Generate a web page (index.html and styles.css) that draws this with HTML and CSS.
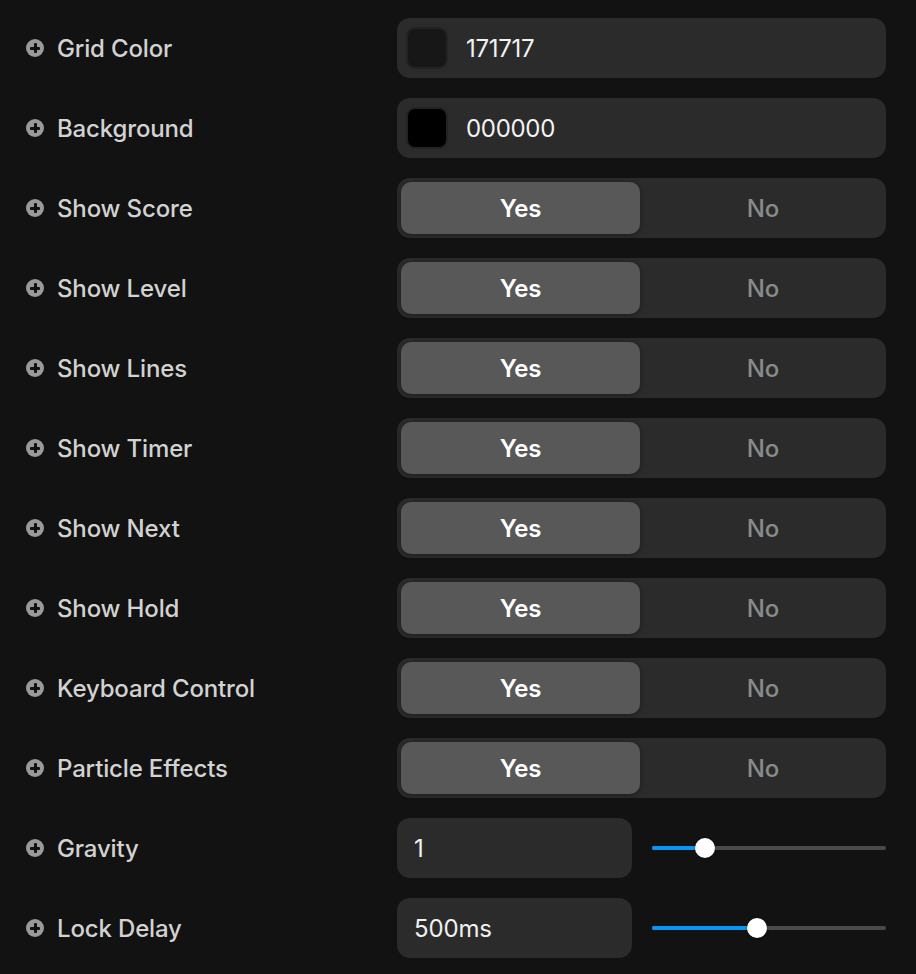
FILE: index.html
```html
<!DOCTYPE html>
<html>
<head>
<meta charset="utf-8">
<link rel="stylesheet" href="styles.css">
</head>
<body>
<div class="settings">
  <div class="row">
    <div class="label"><span class="plus"></span>Grid Color</div>
    <div class="field color"><span class="swatch" style="background:#171717"></span><span class="value">171717</span></div>
  </div>
  <div class="row">
    <div class="label"><span class="plus"></span>Background</div>
    <div class="field color"><span class="swatch" style="background:#000000"></span><span class="value">000000</span></div>
  </div>
  <div class="row">
    <div class="label"><span class="plus"></span>Show Score</div>
    <div class="field toggle"><span class="seg on">Yes</span><span class="seg">No</span></div>
  </div>
  <div class="row">
    <div class="label"><span class="plus"></span>Show Level</div>
    <div class="field toggle"><span class="seg on">Yes</span><span class="seg">No</span></div>
  </div>
  <div class="row">
    <div class="label"><span class="plus"></span>Show Lines</div>
    <div class="field toggle"><span class="seg on">Yes</span><span class="seg">No</span></div>
  </div>
  <div class="row">
    <div class="label"><span class="plus"></span>Show Timer</div>
    <div class="field toggle"><span class="seg on">Yes</span><span class="seg">No</span></div>
  </div>
  <div class="row">
    <div class="label"><span class="plus"></span>Show Next</div>
    <div class="field toggle"><span class="seg on">Yes</span><span class="seg">No</span></div>
  </div>
  <div class="row">
    <div class="label"><span class="plus"></span>Show Hold</div>
    <div class="field toggle"><span class="seg on">Yes</span><span class="seg">No</span></div>
  </div>
  <div class="row">
    <div class="label"><span class="plus"></span>Keyboard Control</div>
    <div class="field toggle"><span class="seg on">Yes</span><span class="seg">No</span></div>
  </div>
  <div class="row">
    <div class="label"><span class="plus"></span>Particle Effects</div>
    <div class="field toggle"><span class="seg on">Yes</span><span class="seg">No</span></div>
  </div>
  <div class="row">
    <div class="label"><span class="plus"></span>Gravity</div>
    <div class="numslider">
      <div class="field number">1</div>
      <div class="slider"><div class="fill" style="width:calc(10px + 0.2 * (100% - 20px))"></div><div class="thumb" style="left:calc(10px + 0.2 * (100% - 20px))"></div></div>
    </div>
  </div>
  <div class="row">
    <div class="label"><span class="plus"></span>Lock Delay</div>
    <div class="numslider">
      <div class="field number">500ms</div>
      <div class="slider"><div class="fill" style="width:calc(10px + 0.444 * (100% - 20px))"></div><div class="thumb" style="left:calc(10px + 0.444 * (100% - 20px))"></div></div>
    </div>
  </div>
</div>
</body>
</html>
```
FILE: styles.css
```css
* { box-sizing: border-box; }
html, body {
  margin: 0;
  background: #121212;
}
body {
  font-family: Inter, "Noto Sans", sans-serif;
  padding: 18px 30px 0 26px;
}
.settings {
  display: flex;
  flex-direction: column;
  gap: 20px;
}
.row {
  display: grid;
  grid-template-columns: 371px 1fr;
  height: 60px;
  align-items: center;
}
.label {
  display: flex;
  align-items: center;
  gap: 13px;
  color: #d2d2d2;
  font-size: 24px;
  font-weight: 500;
  letter-spacing: -0.15px;
}
.plus {
  position: relative;
  width: 18px;
  height: 18px;
  border-radius: 50%;
  background: #9a9a9a;
  flex: none;
}
.plus::before, .plus::after {
  content: "";
  position: absolute;
  background: #121212;
  border-radius: 1px;
}
.plus::before { left: 4px; top: 7.5px; width: 10px; height: 3px; }
.plus::after { left: 7.5px; top: 4px; width: 3px; height: 10px; }
.field {
  height: 60px;
  background: #2b2b2b;
  border-radius: 13px;
}
.color {
  display: flex;
  align-items: center;
  padding-left: 9px;
  gap: 18px;
}
.swatch {
  width: 42px;
  height: 42px;
  border-radius: 9px;
  border: 2px solid #232323;
}
.value {
  color: #f2f2f2;
  font-size: 24px;
  letter-spacing: -0.3px;
}
.toggle {
  display: grid;
  grid-template-columns: 239px 1fr;
  padding: 4px;
}
.seg {
  display: flex;
  align-items: center;
  justify-content: center;
  border-radius: 10px;
  font-size: 24px;
  font-weight: 500;
  letter-spacing: -0.15px;
  color: #8a8a8a;
}
.seg + .seg { padding-left: 4px; }
.seg.on {
  background: #585858;
  color: #ffffff;
  font-weight: 600;
  box-shadow: 0 1px 5px rgba(0,0,0,0.35);
}
.numslider {
  display: grid;
  grid-template-columns: 235px 1fr;
  gap: 20px;
  align-items: center;
}
.number {
  display: flex;
  align-items: center;
  padding-left: 17px;
  color: #f0f0f0;
  font-size: 24px;
  letter-spacing: -0.15px;
}
.slider {
  position: relative;
  height: 4px;
  border-radius: 2px;
  background: #4a4a4a;
}
.fill {
  position: absolute;
  left: 0;
  top: 0;
  bottom: 0;
  background: #0a96f0;
  border-radius: 2px;
}
.thumb {
  position: absolute;
  top: 50%;
  width: 20px;
  height: 20px;
  margin: -10px 0 0 -10px;
  border-radius: 50%;
  background: #ffffff;
  box-shadow: 0 1px 3px rgba(0,0,0,0.4);
}
```
